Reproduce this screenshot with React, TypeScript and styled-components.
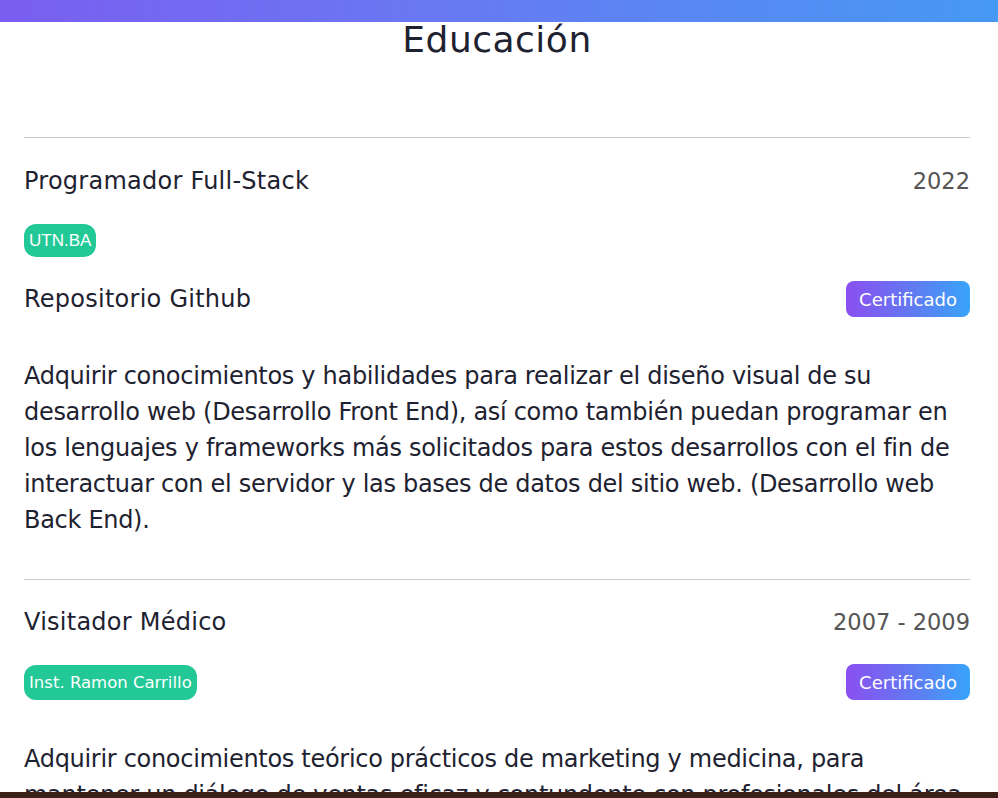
import React from "react";
import styled, { createGlobalStyle } from "styled-components";

const GlobalStyle = createGlobalStyle`
  html, body { margin: 0; padding: 0; background: #ffffff; }
  body {
    font-family: "DejaVu Sans", "Open Sans", sans-serif;
    color: #1e2230;
    overflow: hidden;
  }
`;

const TopBar = styled.div`
  height: 22px;
  background: linear-gradient(90deg, #7a5ef1 0%, #6a76f2 40%, #4699f4 100%);
`;

const Page = styled.main`
  padding: 0 28px 0 24px;
`;

const Title = styled.h1`
  margin: 0;
  font-size: 36px;
  font-weight: 400;
  letter-spacing: 0.5px;
  line-height: 36px;
  text-align: center;
  color: #1e2230;
  padding-bottom: 79px;
`;

const Entry = styled.section<{ $first?: boolean }>`
  border-top: 1px solid #cccccc;
  padding: ${(p) => (p.$first ? "25px" : "24px")} 0 41px;
  display: flex;
  flex-direction: column;
`;

const Row = styled.div<{ $gap?: number }>`
  display: flex;
  justify-content: space-between;
  align-items: center;
  margin-top: ${(p) => p.$gap ?? 0}px;
`;

const EntryTitle = styled.h2`
  margin: 0;
  font-size: 24px;
  font-weight: 400;
  letter-spacing: 0.25px;
  line-height: 36px;
  color: #1e2230;
`;

const Year = styled.span`
  font-size: 22.5px;
  line-height: 36px;
  color: #555555;
`;

const Badge = styled.span<{ $arial?: boolean }>`
  display: inline-flex;
  align-items: center;
  height: ${(p) => (p.$arial ? 33 : 35)}px;
  padding: 0 5px;
  border-radius: 12px;
  background: #22c997;
  color: #ffffff;
  font-family: ${(p) =>
    p.$arial ? '"Liberation Sans", Arial, sans-serif' : '"DejaVu Sans", sans-serif'};
  font-size: ${(p) => (p.$arial ? 17 : 16.5)}px;
`;

const LinkText = styled.span`
  font-size: 24px;
  letter-spacing: 0.25px;
  line-height: 36px;
  color: #1e2230;
`;

const CertButton = styled.a`
  display: inline-flex;
  align-items: center;
  justify-content: center;
  width: 124px;
  height: 36px;
  border-radius: 8px;
  background: linear-gradient(90deg, #8b4ff1 0%, #6477f1 50%, #38a4f9 100%);
  color: #ffffff;
  font-size: 18px;
  font-weight: 400;
  text-decoration: none;
`;

const Paragraph = styled.p`
  margin: 41px 0 0;
  font-size: 24px;
  letter-spacing: -0.3px;
  line-height: 36px;
  color: #1e2230;
`;

const BottomBar = styled.div`
  position: fixed;
  left: 0;
  right: 0;
  bottom: 0;
  height: 6px;
  background: #3a2016;
`;

export default function App() {
  return (
    <>
      <GlobalStyle />
      <TopBar />
      <Page>
        <Title>Educación</Title>
        <Entry $first>
          <Row>
            <EntryTitle>Programador Full-Stack</EntryTitle>
            <Year>2022</Year>
          </Row>
          <Row $gap={25}>
            <Badge $arial>UTN.BA</Badge>
          </Row>
          <Row $gap={24}>
            <LinkText>Repositorio Github</LinkText>
            <CertButton>Certificado</CertButton>
          </Row>
          <Paragraph>
            Adquirir conocimientos y habilidades para realizar el diseño visual de su
            desarrollo web (Desarrollo Front End), así como también puedan programar en
            los lenguajes y frameworks más solicitados para estos desarrollos con el fin de
            interactuar con el servidor y las bases de datos del sitio web. (Desarrollo web
            Back End).
          </Paragraph>
        </Entry>
        <Entry>
          <Row>
            <EntryTitle>Visitador Médico</EntryTitle>
            <Year>2007 - 2009</Year>
          </Row>
          <Row $gap={24}>
            <Badge>Inst. Ramon Carrillo</Badge>
            <CertButton>Certificado</CertButton>
          </Row>
          <Paragraph>
            Adquirir conocimientos teórico prácticos de marketing y medicina, para
            mantener un diálogo de ventas eficaz y contundente con profesionales del
            área de la salud.
          </Paragraph>
        </Entry>
      </Page>
      <BottomBar />
    </>
  );
}
